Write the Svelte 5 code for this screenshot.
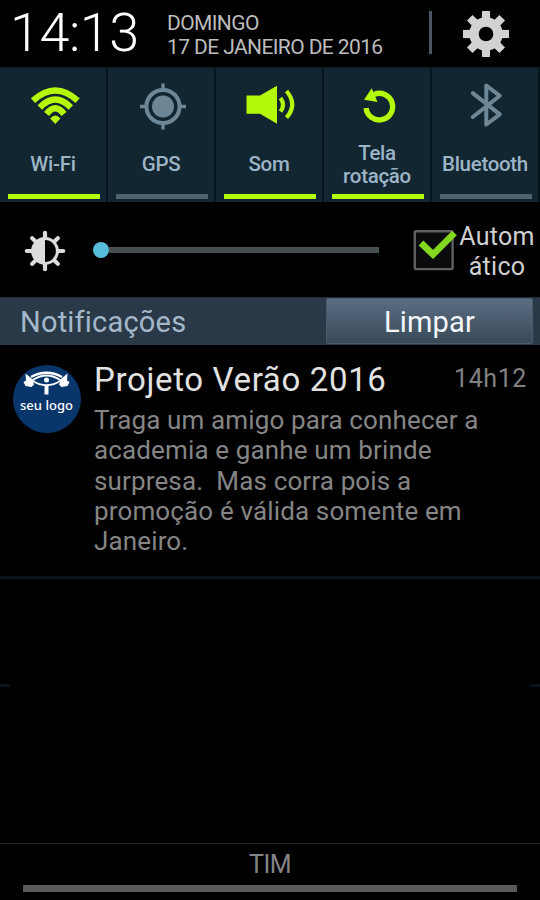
<script lang="ts">
    type Tile = { id: string; label: string; on: boolean };

    const tiles: Tile[] = [
        { id: 'wifi', label: 'Wi-Fi', on: true },
        { id: 'gps', label: 'GPS', on: false },
        { id: 'sound', label: 'Som', on: true },
        { id: 'rotation', label: 'Tela rotação', on: true },
        { id: 'bluetooth', label: 'Bluetooth', on: false }
    ];

    const message = [
        'Traga um amigo para conhecer a',
        'academia e ganhe um brinde',
        'surpresa.  Mas corra pois a',
        'promoção é válida somente em',
        'Janeiro.'
    ];

    const teeth = [0, 45, 90, 135, 180, 225, 270, 315];
    let auto = $state(true);
</script>

<div class="shade">
    <header>
        <div class="clock">14:13</div>
        <div class="date">
            <div class="day">DOMINGO</div>
            <div class="full">17 DE JANEIRO DE 2016</div>
        </div>
        <span class="divider"></span>
        <button class="settings" type="button" aria-label="Configurações">
            <svg viewBox="-24 -24 48 48" width="48" height="48">
                <g fill="#d2d2d2">
                    {#each teeth as angle}
                        <path d="M-4.2-14 L-3.9-23 H3.9 L4.2-14 Z" transform="rotate({angle})" />
                    {/each}
                </g>
                <circle r="12" fill="none" stroke="#d2d2d2" stroke-width="9.4" />
            </svg>
        </button>
    </header>

    <nav class="tiles">
        {#each tiles as tile}
            <button class="tile" class:on={tile.on} type="button">
                <svg class="tile-icon" viewBox="0 0 56 56" width="56" height="56">
                    {#if tile.id === 'wifi'}
                        <g fill="none" stroke="currentColor" stroke-width="6.4">
                            <path d="M8 22.6Q30.3 2.4 52.6 22.6" />
                            <path d="M14.8 29.4Q30.3 13.6 45.8 29.4" />
                            <path d="M21.6 36Q30.3 24.6 39 36" />
                        </g>
                        <path d="M30.3 46L25.2 40.4Q30.3 34.6 35.4 40.4Z" fill="currentColor" />
                    {:else if tile.id === 'gps'}
                        <circle cx="30" cy="28.5" r="11" fill="currentColor" />
                        <circle cx="30" cy="28.5" r="16.6" fill="none" stroke="currentColor" stroke-width="4" />
                        <path d="M30 5.5v7M30 44.5v7M7 28.5h7M46 28.5h7" stroke="currentColor" stroke-width="3.4" />
                    {:else if tile.id === 'sound'}
                        <path d="M5.5 17.5H19L36 7.7V45.8L19 35.8H5.5Z" fill="currentColor" />
                        <g fill="none" stroke="currentColor" stroke-width="4.2">
                            <path d="M39.5 20Q44.5 26.7 39.5 33.6" />
                            <path d="M45.5 13Q57 26.5 45.5 39.6" />
                        </g>
                    {:else if tile.id === 'rotation'}
                        <path d="M17.1 30A13.3 13.3 0 1 0 25 16.5" fill="none" stroke="currentColor" stroke-width="5.4" />
                        <path d="M22.7 10.2L15 21.8L28.5 24Z" fill="currentColor" />
                    {:else}
                        <path d="M15.8 15.2L42.8 36.3L29.3 46.5V7.5L42.8 17.8L15.8 39" fill="none" stroke="currentColor" stroke-width="4" stroke-linejoin="round" stroke-linecap="round" />
                    {/if}
                </svg>
                <span class="tile-label"><span>{tile.label}</span></span>
                <span class="indicator"></span>
            </button>
        {/each}
    </nav>

    <section class="brightness">
        <svg class="sun" viewBox="-21 -21 42 42" width="42" height="42">
            <g stroke="#dcdcdc" stroke-width="4.2" stroke-linecap="round">
                {#each teeth as angle}
                    <path d="M0-12V-18.2" transform="rotate({angle})" />
                {/each}
            </g>
            <circle r="12.4" fill="#000" stroke="#dcdcdc" stroke-width="3" />
            <path d="M0-13A13 13 0 0 0 0 13Z" fill="#dcdcdc" />
        </svg>
        <div class="slider">
            <span class="knob"></span>
            <span class="track"></span>
        </div>
        <button class="auto" type="button" onclick={() => (auto = !auto)}>
            <svg viewBox="0 0 46 46" width="46" height="46">
                <rect x="2.8" y="4.3" width="37.8" height="37.8" rx="1.5" fill="#0a0b0c" stroke="#5e6061" stroke-width="2.4" />
                {#if auto}
                    <path d="M9 16L21 27.5L42.5 6" fill="none" stroke="#84d820" stroke-width="6.6" />
                {/if}
            </svg>
            <span class="auto-label">Autom<br />ático</span>
        </button>
    </section>

    <div class="bar">
        <h2>Notificações</h2>
        <button class="clear" type="button"><span>Limpar</span></button>
    </div>

    <article>
        <svg class="logo" viewBox="0 0 68 68" width="68" height="68">
            <circle cx="34" cy="34" r="34" fill="#08366b" />
            <g fill="none" stroke="#fff">
                <path d="M18 12Q33.5 3.5 49 12" stroke-width="2.4" />
                <path d="M19 15.5Q33.5 5.5 48 15.5Q33.5 25 19 15.5Z" stroke-width="1.8" />
                <path d="M33.5 20V29.5" stroke-width="4" />
            </g>
            <circle cx="33.5" cy="15" r="2.5" fill="#fff" />
            <path d="M12.5 8.5L18.5 13.5L21 19.5L18.5 22L12.5 21L10.5 17L13 15.5Z" fill="#fff" />
            <path d="M54.5 8.5L48.5 13.5L46 19.5L48.5 22L54.5 21L56.5 17L54 15.5Z" fill="#fff" />
            <text x="33.5" y="45" text-anchor="middle" textLength="53" fill="#fff">seu logo</text>
        </svg>
        <div class="content">
            <div class="heading">
                <h3>Projeto Verão 2016</h3>
                <time>14h12</time>
            </div>
            <p>
                {#each message as line}
                    <span>{line}</span>
                {/each}
            </p>
        </div>
    </article>

    <div class="empty">
        <span></span>
        <span></span>
    </div>

    <footer>
        <div class="carrier">TIM</div>
        <div class="handle"></div>
    </footer>
</div>

<style>
    :global(body) {
        margin: 0;
        background: #000;
    }

    .shade {
        display: flex;
        flex-direction: column;
        width: 540px;
        height: 900px;
        overflow: hidden;
        background: #000;
        font-family: Roboto, "Liberation Sans", sans-serif;
    }

    button {
        margin: 0;
        padding: 0;
        border: 0;
        background: none;
        font: inherit;
        color: inherit;
    }

    h2, h3, p {
        margin: 0;
        font-weight: 400;
    }

    svg {
        display: block;
        flex-shrink: 0;
    }

    header {
        display: flex;
        align-items: flex-start;
        height: 67px;
        flex-shrink: 0;
    }

    .clock {
        width: 157px;
        padding-left: 10px;
        padding-top: 1px;
        box-sizing: border-box;
        font-size: 54px;
        line-height: 64px;
        font-weight: 300;
        letter-spacing: -0.5px;
        color: #fff;
        white-space: nowrap;
    }

    .date {
        width: 262px;
        padding: 11px 0 0 10px;
        font-size: 21px;
        line-height: 24px;
        letter-spacing: -0.6px;
        color: #bcbcbc;
        white-space: nowrap;
    }

    .divider {
        width: 3px;
        height: 43px;
        margin-top: 11px;
        background: #4a5663;
    }

    .settings {
        margin: 10px 0 0 30px;
    }

    .tiles {
        display: grid;
        grid-template-columns: repeat(5, 108px);
        height: 135px;
        flex-shrink: 0;
        background: #122631;
        border-top: 1px solid #0b1c24;
        box-sizing: border-box;
    }

    .tile {
        display: flex;
        flex-direction: column;
        align-items: center;
        box-sizing: border-box;
        padding: 10px 0 3px;
        border-right: 2px solid #07151d;
        color: #6d8797;
    }

    .tile.on {
        color: #b4f80a;
    }

    .tile-label {
        display: flex;
        align-items: center;
        justify-content: center;
        height: 60px;
        width: 100px;
        padding-top: 1px;
        box-sizing: border-box;
        font-size: 20.5px;
        font-weight: 500;
        line-height: 23px;
        letter-spacing: -0.3px;
        color: #9db4c6;
    }

    .indicator {
        width: 92px;
        height: 5px;
        margin-left: 2px;
        background: #50616f;
    }

    .tile.on .indicator {
        background: #b4f80a;
    }

    .brightness {
        display: flex;
        align-items: center;
        height: 95px;
        flex-shrink: 0;
    }

    .sun {
        margin: 2px 0 0 24px;
    }

    .slider {
        display: flex;
        align-items: center;
        width: 286px;
        margin-left: 27px;
    }

    .knob {
        width: 16px;
        height: 16px;
        border-radius: 50%;
        background: #58bddb;
    }

    .track {
        flex: 1;
        height: 6px;
        background: #465050;
    }

    .auto {
        display: flex;
        align-items: center;
        margin-left: 33px;
    }

    .auto-label {
        width: 78px;
        padding-top: 4px;
        font-size: 25px;
        line-height: 30px;
        letter-spacing: 0.3px;
        color: #d0d0d0;
    }

    .bar {
        display: flex;
        justify-content: space-between;
        height: 48px;
        flex-shrink: 0;
        padding: 0 7px 2px 20px;
        box-sizing: border-box;
        border-top: 1px solid #1e303d;
        background: #293947;
    }

    h2 {
        font-size: 29px;
        line-height: 49px;
        letter-spacing: 0.2px;
        color: #a3b8ca;
    }

    .clear {
        width: 207px;
        height: 46px;
        box-sizing: border-box;
        border: 1px solid #4a5b6b;
        border-radius: 2px;
        background: linear-gradient(#5b6d82, #384a58);
        font-size: 29px;
        line-height: 46px;
        letter-spacing: 0.2px;
        color: #f2f6fa;
    }

    article {
        display: flex;
        height: 234px;
        flex-shrink: 0;
        box-sizing: border-box;
        border-bottom: 3px solid #0b141d;
    }

    .logo {
        margin: 20px 13px 0 13px;
    }

    .logo text {
        font-family: "Noto Sans", "Open Sans", sans-serif;
        font-size: 13px;
        font-weight: 500;
    }

    .content {
        flex: 1;
    }

    .heading {
        display: flex;
        justify-content: space-between;
        height: 60px;
        padding-right: 13px;
        white-space: nowrap;
    }

    h3 {
        font-size: 33px;
        line-height: 70px;
        letter-spacing: 0.65px;
        color: #e2e2e2;
    }

    time {
        font-size: 25px;
        line-height: 68px;
        letter-spacing: 0.6px;
        color: #808080;
    }

    p {
        font-size: 26px;
        line-height: 30.3px;
        letter-spacing: 0.14px;
        color: #858585;
        white-space: pre;
    }

    p span {
        display: block;
    }

    .empty {
        display: flex;
        flex: 1;
        justify-content: space-between;
    }

    .empty span {
        width: 10px;
        height: 3px;
        margin-top: 105px;
        background: #09131c;
    }

    footer {
        display: flex;
        flex-direction: column;
        align-items: center;
        height: 57px;
        box-sizing: border-box;
        border-top: 1px solid #202422;
    }

    .carrier {
        padding-top: 1px;
        font-size: 25px;
        line-height: 40px;
        letter-spacing: -0.5px;
        color: #858585;
    }

    .handle {
        width: 494px;
        height: 7px;
        background: #5a5a5a;
    }
</style>
